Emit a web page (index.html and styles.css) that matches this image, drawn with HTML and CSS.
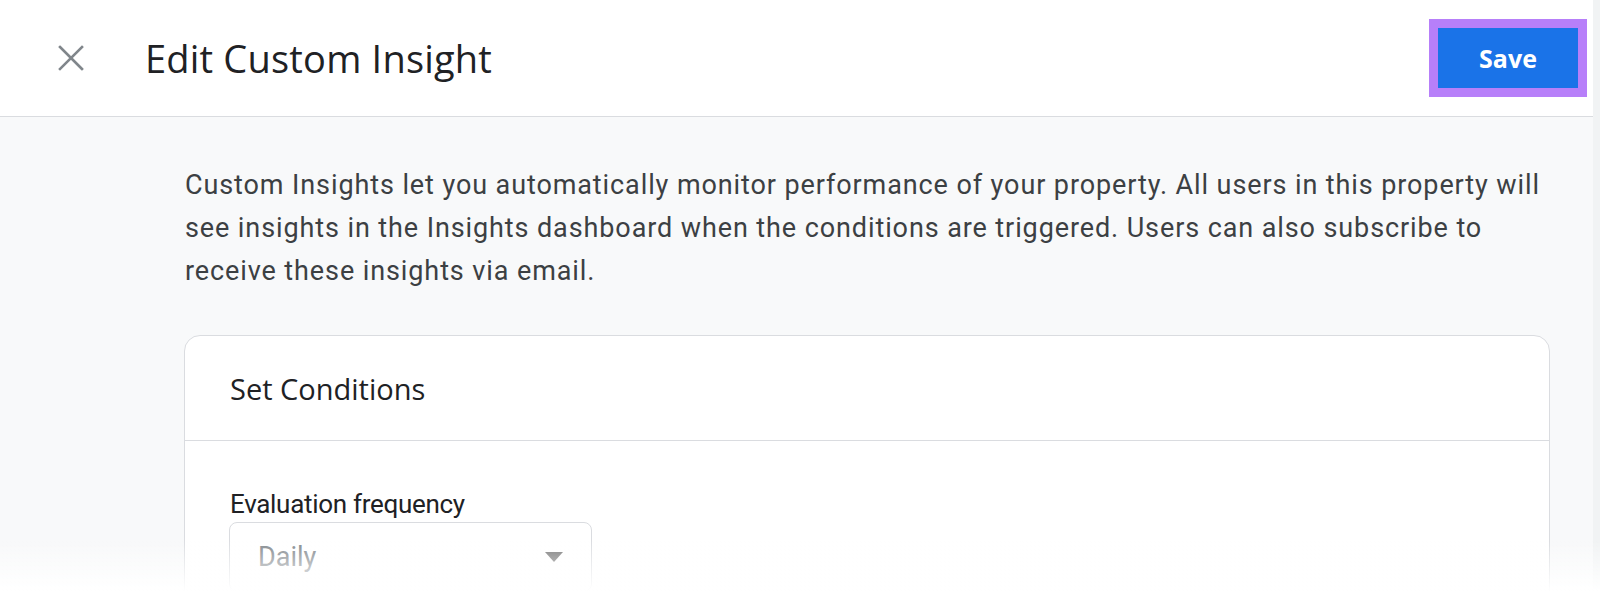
FILE: index.html
```html
<!DOCTYPE html>
<html lang="en">
<head>
<meta charset="utf-8">
<title>Edit Custom Insight</title>
<link rel="stylesheet" href="styles.css">
</head>
<body>
<div class="page">
  <div class="main">
    <header class="topbar">
      <button class="close" aria-label="Close">
        <svg width="26" height="26" viewBox="0 0 26 26"><path d="M2 2 L24 24 M24 2 L2 24" stroke="#80868b" stroke-width="2.6" stroke-linecap="square"/></svg>
      </button>
      <h1 class="title">Edit Custom Insight</h1>
      <div class="save-wrap"><button class="save">Save</button></div>
    </header>
    <section class="content">
      <p class="intro">Custom Insights let you automatically monitor performance of your property. All users in this property will<br>see insights in the Insights dashboard when the conditions are triggered. Users can also subscribe to<br>receive these insights via email.</p>
      <div class="card">
        <div class="card-head">Set Conditions</div>
        <div class="card-body">
          <div class="field-label">Evaluation frequency</div>
          <div class="select">
            <span class="select-value">Daily</span>
            <span class="caret"></span>
          </div>
        </div>
      </div>
    </section>
  </div>
  <div class="scroll-strip"></div>
</div>
<div class="fade"></div>
</body>
</html>
```
FILE: styles.css
```css
html, body {
  margin: 0;
  padding: 0;
  height: 100%;
  overflow: hidden;
}
body {
  background: #f8f9fa;
  font-family: Roboto, "Liberation Sans", sans-serif;
  color: #3c4043;
}
.page {
  display: flex;
  height: 591px;
  overflow: hidden;
}
.main {
  flex: 1;
  display: flex;
  flex-direction: column;
  min-width: 0;
}
.scroll-strip {
  width: 7px;
  flex-shrink: 0;
  background: #f1f3f4;
}
.topbar {
  flex-shrink: 0;
  height: 116px;
  background: #fff;
  border-bottom: 1px solid #dadce0;
  display: flex;
  align-items: center;
  padding-left: 58px;
  padding-right: 6px;
}
.close {
  border: 0;
  background: none;
  padding: 0;
  width: 26px;
  height: 26px;
  display: flex;
}
.title {
  margin: 0 0 0 61px;
  font-family: "Open Sans", sans-serif;
  font-weight: 400;
  font-size: 38px;
  letter-spacing: 0.2px;
  color: #202124;
  flex: 1;
}
.save-wrap {
  border: 9px solid #b77ff9;
  display: flex;
}
.save {
  width: 140px;
  height: 60px;
  border: 0;
  background: #1a73e8;
  color: #fff;
  font-family: "Open Sans", sans-serif;
  font-weight: 700;
  font-size: 25px;
  padding: 0;
}
.content {
  flex-shrink: 0;
  padding: 47px 43px 0 185px;
}
.intro {
  margin: 0;
  font-size: 27px;
  letter-spacing: 0.9px;
  line-height: 43px;
  color: #3c4043;
  white-space: nowrap;
}
.card {
  margin: 42px 0 0 -1px;
  background: #fff;
  border: 1px solid #dadce0;
  border-radius: 16px;
  height: 300px;
}
.card-head {
  height: 104px;
  border-bottom: 1px solid #dadce0;
  display: flex;
  align-items: center;
  padding-left: 45px;
  font-family: "Open Sans", sans-serif;
  font-size: 29px;
  color: #202124;
}
.card-body {
  padding: 48px 0 0 45px;
}
.field-label {
  font-size: 26px;
  letter-spacing: -0.3px;
  line-height: 30px;
  color: #202124;
}
.select {
  margin-top: 3px;
  margin-left: -1px;
  width: 363px;
  height: 70px;
  border: 1px solid #dadce0;
  border-radius: 8px;
  display: flex;
  align-items: center;
  justify-content: space-between;
  padding: 0 28px 0 28px;
  box-sizing: border-box;
}
.select-value {
  font-size: 27px;
  color: #80868b;
}
.caret {
  width: 0;
  height: 0;
  border-left: 9px solid transparent;
  border-right: 9px solid transparent;
  border-top: 10px solid #757575;
}
.fade {
  position: fixed;
  left: 0;
  right: 0;
  bottom: 0;
  height: 52px;
  background: linear-gradient(rgba(255,255,255,0), rgba(255,255,255,0.97));
  pointer-events: none;
}
```
